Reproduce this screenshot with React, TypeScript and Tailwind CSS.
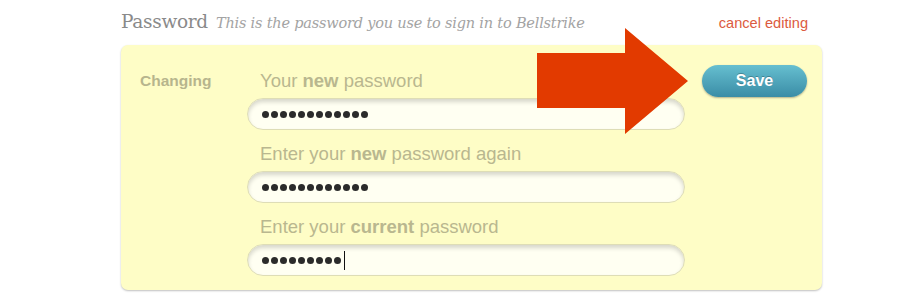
import React from 'react';

const dots = (n: number) => Array.from({ length: n }, (_, i) => i);

function Field({ label, count, caret }: { label: React.ReactNode; count: number; caret?: boolean }) {
  return (
    <div className="flex flex-col">
      <div className="h-[20px] pl-[13px] text-[18.5px] leading-[20px] text-[#b9b78f]">{label}</div>
      <div className="mt-[7px] h-[32px] w-[438px] rounded-full border border-[#deddb6] bg-[#fffff2] shadow-[inset_0_3px_4px_rgba(0,0,0,0.16)] flex items-center pl-[14px]">
        <div className="flex items-center gap-[2px]">
          {dots(count).map(i => (
            <div key={i} className="w-[7px] h-[7px] rounded-full bg-[#2b2b2b]" />
          ))}
          {caret && <div className="ml-[1px] w-px h-[19px] bg-[#111]" />}
        </div>
      </div>
    </div>
  );
}

export default function App() {
  return (
    <div className="relative w-[920px] h-[305px] bg-white pl-[121px] pt-[10px] font-['Liberation_Sans',Arial,sans-serif]">
      <div className="w-[701px] h-[26px] flex items-end justify-between">
        <div className="flex items-baseline">
          <span className="font-['DejaVu_Serif',Georgia,serif] text-[18.5px] text-[#8a8a8a] tracking-[-0.3px]">Password</span>
          <span className="ml-[8px] font-['DejaVu_Serif',Georgia,serif] italic text-[14.5px] text-[#a3a3a3] tracking-[-0.2px]">
            This is the password you use to sign in to Bellstrike
          </span>
        </div>
        <span className="mb-[1px] mr-[14px] text-[14.6px] text-[#dc5a40]">cancel editing</span>
      </div>

      <div className="mt-[9px] w-[701px] h-[245px] rounded-[7px] bg-[#fefdc6] shadow-[0_1px_2px_rgba(0,0,0,0.25)] flex pt-[26px]">
        <div className="w-[126px] pl-[19px] text-[15.5px] leading-[20px] font-bold text-[#b7b58d]">Changing</div>
        <div className="flex flex-col gap-[14px]">
          <Field label={<>Your <b>new</b> password</>} count={12} />
          <Field label={<>Enter your <b>new</b> password again</>} count={12} />
          <Field label={<>Enter your <b>current</b> password</>} count={9} caret />
        </div>
        <div className="ml-[17px] mt-[-6px]">
          <button className="w-[105px] h-[32px] rounded-full bg-gradient-to-b from-[#66bfd0] to-[#3a8da6] shadow-[0_1px_2px_rgba(0,0,0,0.3)] text-white font-bold text-[16px] [text-shadow:0_-1px_0_rgba(0,0,0,0.25)]">
            Save
          </button>
        </div>
      </div>

      <svg className="absolute left-0 top-0 pointer-events-none" width="920" height="305" viewBox="0 0 920 305">
        <polygon points="537,53 625,53 625,28 688,81 625,134 625,108 537,108" fill="#e23a00" />
      </svg>
    </div>
  );
}
